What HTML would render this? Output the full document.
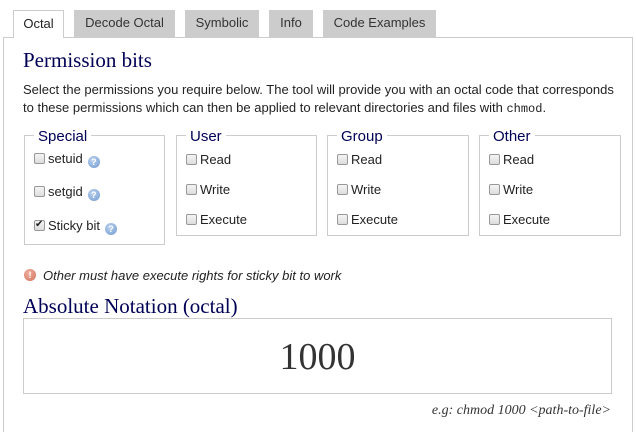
<!DOCTYPE html>
<html style="overflow:hidden;height:432px"><head><style>
*{margin:0;padding:0;box-sizing:border-box}
body{width:636px;height:432px;background:#fff;position:relative;overflow:hidden;font-family:"Liberation Sans",Arial,sans-serif;font-size:13px;color:#222}
.a{position:absolute}
.tab{position:absolute;top:10px;height:27px;background:#ccc;color:#333;font-size:13px;line-height:26px;text-align:center}
.panel{position:absolute;left:3px;top:37px;width:630px;height:395px;border:1px solid #ccc;border-bottom:none}
.serif{font-family:"Liberation Serif",Georgia,serif;color:#000055}
.fs{position:absolute;border:1px solid #ccc}
.lg{position:absolute;top:-7px;background:#fff;padding:0 4px;font-size:15px;color:#000055;line-height:16px}
.row{position:absolute;left:9px;font-size:13px;line-height:14px;color:#222}
.cb{display:inline-block;width:11px;height:11px;border:1px solid #999;border-radius:2px;background:linear-gradient(#f4f4f4,#ddd);vertical-align:-1px;margin-right:3px;position:relative}
.q{display:inline-block;width:12px;height:12px;border-radius:50%;background:radial-gradient(circle at 40% 35%,#bcd3ef,#6f98cf);color:#fff;font-size:9px;line-height:12px;text-align:center;font-weight:bold;vertical-align:-2px;margin-left:5px}
</style></head><body>
<div class="panel"></div>
<div class="tab" style="left:13px;width:51px;background:#fff;border:1px solid #ccc;border-bottom:none;height:28px;color:#222">Octal</div>
<div class="tab" style="left:74px;width:101px">Decode Octal</div>
<div class="tab" style="left:185px;width:74px">Symbolic</div>
<div class="tab" style="left:269px;width:44px">Info</div>
<div class="tab" style="left:323px;width:113px">Code Examples</div>

<div class="a serif" style="left:23px;top:48px;font-size:21px;line-height:24px">Permission bits</div>
<div class="a" style="left:23px;top:81px;width:600px;line-height:18px;font-size:13px;color:#222">Select the permissions you require below. The tool will provide you with an octal code that corresponds to these permissions which can then be applied to relevant directories and files with <span style="font-family:'Liberation Mono',monospace;font-size:12px">chmod</span>.</div>

<div class="fs" style="left:24px;top:135px;width:141px;height:110px"><div class="lg" style="left:9px">Special</div>
<div class="row" style="top:16px"><span class="cb"></span>setuid<span class="q">?</span></div>
<div class="row" style="top:49px"><span class="cb"></span>setgid<span class="q">?</span></div>
<div class="row" style="top:83px"><span class="cb"><span style="position:absolute;left:0;top:-3px;font-size:10px;color:#222">✔</span></span>Sticky bit<span class="q">?</span></div></div>

<div class="fs" style="left:176px;top:135px;width:141px;height:101px"><div class="lg" style="left:9px">User</div>
<div class="row" style="top:17px"><span class="cb"></span>Read</div>
<div class="row" style="top:47px"><span class="cb"></span>Write</div>
<div class="row" style="top:77px"><span class="cb"></span>Execute</div></div>

<div class="fs" style="left:327px;top:135px;width:142px;height:101px"><div class="lg" style="left:9px">Group</div>
<div class="row" style="top:17px"><span class="cb"></span>Read</div>
<div class="row" style="top:47px"><span class="cb"></span>Write</div>
<div class="row" style="top:77px"><span class="cb"></span>Execute</div></div>

<div class="fs" style="left:479px;top:135px;width:142px;height:101px"><div class="lg" style="left:9px">Other</div>
<div class="row" style="top:17px"><span class="cb"></span>Read</div>
<div class="row" style="top:47px"><span class="cb"></span>Write</div>
<div class="row" style="top:77px"><span class="cb"></span>Execute</div></div>

<div class="a" style="left:24px;top:269px;width:12px;height:12px;border-radius:50%;background:radial-gradient(circle at 40% 35%,#f0b0a0,#d0705a);color:#fff;font-size:9px;line-height:12px;text-align:center;font-weight:bold">!</div>
<div class="a" style="left:43px;top:268px;font-style:italic;font-size:13px;color:#222">Other must have execute rights for sticky bit to work</div>

<div class="a serif" style="left:23px;top:294px;font-size:21px;line-height:24px">Absolute Notation (octal)</div>
<div class="a" style="left:23px;top:318px;width:589px;height:76px;border:1px solid #ccc;text-align:center;font-family:'Liberation Serif',Georgia,serif;font-size:38px;line-height:76px;color:#333">1000</div>
<div class="a" style="right:25px;top:403px;font-family:'Liberation Serif',Georgia,serif;font-style:italic;font-size:14px;color:#333">e.g: chmod 1000 &lt;path-to-file&gt;</div>
</body></html>
